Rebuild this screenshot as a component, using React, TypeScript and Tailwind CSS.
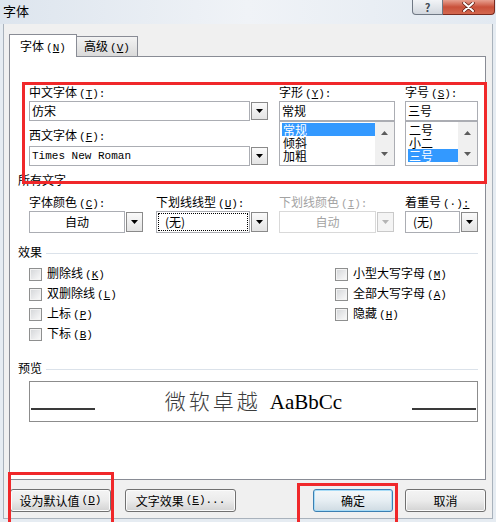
import type { ReactNode } from "react";

const ui = "font-['Noto_Sans_CJK_SC','Microsoft_YaHei',sans-serif]";

// access key like (T), drawn half-width after the CJK label
function K({ c, tail = "" }: { c: string; tail?: string }) {
    return (
        <span className="ml-[2px] font-['Liberation_Mono',monospace] text-[11px]">
            (<span className="underline underline-offset-[1px]">{c}</span>){tail}
        </span>
    );
}

function Label({ children, disabled }: { children: ReactNode; disabled?: boolean }) {
    return (
        <div className={`h-[14px] leading-[14px] whitespace-nowrap ${disabled ? "text-[#a3a3a3]" : ""}`}>
            {children}
        </div>
    );
}

function Arrow({ up, color = "#000" }: { up?: boolean; color?: string }) {
    return (
        <svg width="7" height="4" viewBox="0 0 7 4">
            <path d={up ? "M0 4h7L3.5 0z" : "M0 0h7L3.5 4z"} fill={color} />
        </svg>
    );
}

function DropButton({ tall, disabled }: { tall?: boolean; disabled?: boolean }) {
    return (
        <div
            className={`w-[17px] ${tall ? "h-[20px]" : "h-[18px]"} shrink-0 flex items-center justify-center border ${
                disabled
                    ? "border-[#c9c9c9] bg-[#f4f4f4]"
                    : "border-[#8a8a8a] bg-linear-to-b from-[#fafafa] to-[#e4e4e4]"
            }`}
        >
            <Arrow color={disabled ? "#b4b4b4" : "#000"} />
        </div>
    );
}

function Combo({
    children,
    tall,
    disabled,
    center,
}: {
    children: ReactNode;
    tall?: boolean;
    disabled?: boolean;
    center?: boolean;
}) {
    return (
        <div className={`flex items-center gap-[1px] ${tall ? "h-[22px]" : "h-[20px]"}`}>
            <div
                className={`flex-1 h-full border bg-white flex items-center whitespace-nowrap ${
                    center ? "justify-center" : "pl-[2px]"
                } ${disabled ? "border-[#d9d9d9] text-[#a3a3a3]" : "border-[#abadb3]"}`}
            >
                {children}
            </div>
            <DropButton tall={tall} disabled={disabled} />
        </div>
    );
}

function ListBox({ items, selected }: { items: string[]; selected: number }) {
    return (
        <div className="h-[45px] border border-[#abadb3] bg-white flex overflow-hidden">
            <div className="flex-1 pt-[1px] pl-[2px]">
                {items.map((it, i) => (
                    <div
                        key={it}
                        className={`h-[13px] leading-[13px] pl-[1px] ${i === selected ? "bg-[#3399ff] text-white" : ""}`}
                    >
                        {it}
                    </div>
                ))}
            </div>
            <div className="w-[19px] bg-[#f0f0f0] flex flex-col">
                <div className="flex-1 flex items-center justify-center">
                    <Arrow up color="#5c5c5c" />
                </div>
                <div className="flex-1 flex items-center justify-center">
                    <Arrow color="#5c5c5c" />
                </div>
            </div>
        </div>
    );
}

function Check({ label, k }: { label: string; k: string }) {
    return (
        <div className="h-[20px] flex items-center">
            <span className="w-[13px] h-[13px] shrink-0 border border-[#8e8f8f] bg-linear-to-br from-[#d3d5d8] to-[#fbfbfb] shadow-[inset_0_0_0_1px_#f3f3f3]" />
            <span className="ml-[5px] leading-[14px] whitespace-nowrap">
                {label}
                <K c={k} />
            </span>
        </div>
    );
}

function Group({ title }: { title: string }) {
    return (
        <div className="h-[14px] flex items-center">
            <span className="leading-[14px]">{title}</span>
            <div className="flex-1 h-px bg-[#dbe2ea] ml-[4px] mt-[3px]" />
        </div>
    );
}

function Btn({ children, className, primary }: { children: ReactNode; className: string; primary?: boolean }) {
    return (
        <div
            className={`h-[23px] rounded-[3px] border flex items-center justify-center whitespace-nowrap bg-linear-to-b ${
                primary
                    ? "border-[#3c7fb1] from-[#f4f7f9] via-[#e6eef3] to-[#cfdbe3] shadow-[inset_0_0_0_1px_#a8dcf7]"
                    : "border-[#707070] from-[#f4f4f4] via-[#ebebeb] to-[#d3d3d3] shadow-[inset_0_0_0_1px_#fbfbfb]"
            } ${className}`}
        >
            {children}
        </div>
    );
}

function TitleBar() {
    return (
        <div className="h-[24px] flex justify-between bg-linear-to-r from-[#dde5ee] via-[#f0f3f7] to-[#e2e9f1]">
            <div className="pl-[3px] pt-[3px] text-[13px] leading-[16px]">字体</div>
            <div className="flex h-[15px] mr-[1px]">
                <div className="w-[31px] h-full rounded-bl-[4px] border border-t-0 border-[#6f7884] bg-linear-to-b from-[#f2f4f7] to-[#d2d7de] flex items-center justify-center text-[11px] font-bold leading-none text-[#414a57]">
                    ?
                </div>
                <div className="w-[52px] h-full rounded-br-[4px] border border-t-0 border-l-0 border-[#7a2a1e] bg-linear-to-b from-[#e7a090] via-[#c9503a] to-[#d4684f] flex items-center justify-center">
                    <svg width="13" height="10" viewBox="0 0 13 10">
                        <path d="M2 1l9 8M11 1l-9 8" stroke="#5b1d12" strokeWidth="3.4" strokeLinecap="round" />
                        <path d="M2 1l9 8M11 1l-9 8" stroke="#fff" strokeWidth="2" strokeLinecap="round" />
                    </svg>
                </div>
            </div>
        </div>
    );
}

function Tabs() {
    return (
        <div className="flex items-end h-[22px]">
            <div className="relative z-10 -mb-px h-[23px] w-[68px] border border-b-0 border-[#898c95] bg-white flex items-center justify-center pt-[2px]">
                <span className="leading-[14px]">
                    字体
                    <K c="N" />
                </span>
            </div>
            <div className="h-[20px] w-[61px] border border-l-0 border-b-0 border-[#898c95] bg-linear-to-b from-[#f3f3f3] to-[#dadada] flex items-center justify-center pt-[1px]">
                <span className="leading-[14px]">
                    高级
                    <K c="V" />
                </span>
            </div>
        </div>
    );
}

function FontPanel() {
    return (
        <div className="w-[477px] h-[424px] border border-[#898c95] bg-white pl-[8px] pr-[7px] pt-[28px]">
            {/* face / style / size */}
            <div className="pl-[11px] flex">
                <div className="w-[239px]">
                    <Label>
                        中文字体
                        <K c="T" tail=":" />
                    </Label>
                    <div className="mt-[2px]">
                        <Combo>仿宋</Combo>
                    </div>
                    <div className="mt-[7px]">
                        <Label>
                            西文字体
                            <K c="F" tail=":" />
                        </Label>
                    </div>
                    <div className="mt-[4px]">
                        <Combo>
                            <span className="font-['Liberation_Mono',monospace] text-[11px]">Times New Roman</span>
                        </Combo>
                    </div>
                </div>
                <div className="w-[116px] ml-[11px]">
                    <Label>
                        字形
                        <K c="Y" tail=":" />
                    </Label>
                    <div className="mt-[2px] h-[20px] border border-[#abadb3] pl-[2px] flex items-center">常规</div>
                    <ListBox items={["常规", "倾斜", "加粗"]} selected={0} />
                </div>
                <div className="w-[73px] ml-[10px]">
                    <Label>
                        字号
                        <K c="S" tail=":" />
                    </Label>
                    <div className="mt-[2px] h-[20px] border border-[#abadb3] pl-[2px] flex items-center">三号</div>
                    <ListBox items={["二号", "小二", "三号"]} selected={2} />
                </div>
            </div>

            {/* all text */}
            <div className="mt-[7px] h-[14px] leading-[14px]">所有文字</div>
            <div className="mt-[8px] pl-[11px] flex">
                <div className="w-[114px]">
                    <Label>
                        字体颜色
                        <K c="C" tail=":" />
                    </Label>
                    <div className="mt-[2px]">
                        <Combo tall center>
                            自动
                        </Combo>
                    </div>
                </div>
                <div className="w-[112px] ml-[13px]">
                    <Label>
                        下划线线型
                        <K c="U" tail=":" />
                    </Label>
                    <div className="mt-[2px] flex items-center gap-[1px] h-[22px]">
                        <div className="flex-1 h-full border border-[#abadb3] bg-white p-[1px]">
                            <div className="h-full border border-dotted border-black flex items-center pl-[6px]">(无)</div>
                        </div>
                        <DropButton tall />
                    </div>
                </div>
                <div className="w-[115px] ml-[11px]">
                    <Label disabled>
                        下划线颜色
                        <K c="I" tail=":" />
                    </Label>
                    <div className="mt-[2px]">
                        <Combo tall center disabled>
                            自动
                        </Combo>
                    </div>
                </div>
                <div className="w-[73px] ml-[11px]">
                    <Label>
                        着重号
                        <span className="ml-[2px] font-['Liberation_Mono',monospace] text-[11px]">
                            (·)<span className="underline">:</span>
                        </span>
                    </Label>
                    <div className="mt-[2px]">
                        <Combo tall>
                            <span className="pl-[5px]">(无)</span>
                        </Combo>
                    </div>
                </div>
            </div>

            {/* effects */}
            <div className="mt-[12px]">
                <Group title="效果" />
            </div>
            <div className="mt-[5px] pl-[11px] flex">
                <div className="w-[306px]">
                    <Check label="删除线" k="K" />
                    <Check label="双删除线" k="L" />
                    <Check label="上标" k="P" />
                    <Check label="下标" k="B" />
                </div>
                <div>
                    <Check label="小型大写字母" k="M" />
                    <Check label="全部大写字母" k="A" />
                    <Check label="隐藏" k="H" />
                </div>
            </div>

            {/* preview */}
            <div className="mt-[17px]">
                <Group title="预览" />
            </div>
            <div className="mt-[6px] ml-[11px] h-[41px] border border-[#8c8c8c] flex items-center px-[1px]">
                <div className="w-[64px] h-[2px] bg-[#3a3a3a] self-end mb-[11px]" />
                <div className="flex-1 text-center whitespace-nowrap leading-[24px]">
                    <span className="text-[21px] tracking-[3px] font-light text-[#3c3c3c]">微软卓越</span>
                    <span className="ml-[9px] text-[21px] font-['Liberation_Serif',serif]">AaBbCc</span>
                </div>
                <div className="w-[64px] h-[2px] bg-[#3a3a3a] self-end mb-[11px]" />
            </div>
        </div>
    );
}

export default function App() {
    return (
        <div className={`relative w-[496px] h-[522px] overflow-hidden bg-[#e6ecf2] text-[12px] text-black ${ui}`}>
            <TitleBar />
            <div className="mx-[3px] h-[495px] border-x border-b border-[#a9b2bc] bg-[#f0f0f0] pl-[5px] pt-[10px]">
                <Tabs />
                <FontPanel />
                <div className="mt-[9px] w-[477px] flex">
                    <Btn className="w-[101px] ml-[1px]">
                        设为默认值
                        <K c="D" />
                    </Btn>
                    <Btn className="w-[111px] ml-[14px]">
                        文字效果
                        <K c="E" tail="..." />
                    </Btn>
                    <div className="flex-1" />
                    <Btn className="w-[80px]" primary>
                        确定
                    </Btn>
                    <Btn className="w-[81px] ml-[12px]">取消</Btn>
                </div>
            </div>

            {/* red callout frames drawn over the dialog */}
            <div className="absolute left-[22px] top-[82px] w-[465px] h-[102px] border-[3px] border-[#f0282a]" />
            <div className="absolute left-[8px] top-[472px] w-[106px] h-[60px] border-[3px] border-[#f0282a]" />
            <div className="absolute left-[297px] top-[483px] w-[101px] h-[50px] border-[3px] border-[#f0282a]" />
        </div>
    );
}
